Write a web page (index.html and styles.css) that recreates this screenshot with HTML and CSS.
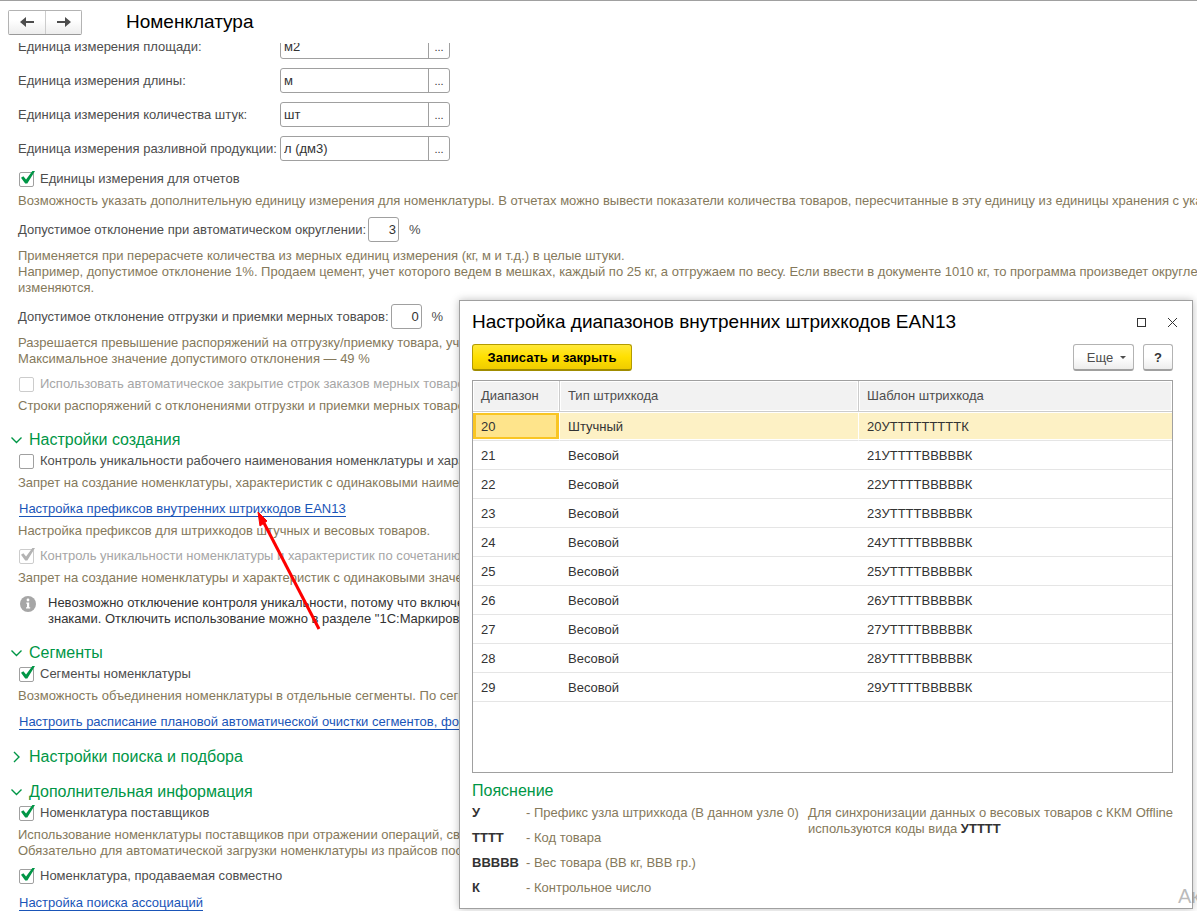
FILE: index.html
```html
<!DOCTYPE html>
<html lang="ru">
<head>
    <meta charset="UTF-8">
    <meta name="viewport" content="width=device-width, initial-scale=1.0">
    <title>Номенклатура</title>
    <link rel="stylesheet" href="styles.css">
</head>
<body>
    <header class="page-header">
        <div class="nav-buttons">
            <button type="button" class="nav-btn" aria-label="Назад">
                <svg width="16" height="12" viewBox="0 0 16 12"><path d="M1 6 L7 1 V5 H15 V7 H7 V11 Z" fill="#4d4d4d"/></svg>
            </button>
            <button type="button" class="nav-btn" aria-label="Вперед">
                <svg width="16" height="12" viewBox="0 0 16 12"><path d="M15 6 L9 1 V5 H1 V7 H9 V11 Z" fill="#4d4d4d"/></svg>
            </button>
        </div>
        <h1 class="page-title">Номенклатура</h1>
    </header>

    <main class="content">
        <form class="settings">
            <div class="field">
                <label class="field-label" for="area">Единица измерения площади:</label>
                <div class="picker"><input type="text" id="area" value="м2"><button type="button">...</button></div>
            </div>
            <div class="field">
                <label class="field-label" for="length">Единица измерения длины:</label>
                <div class="picker"><input type="text" id="length" value="м"><button type="button">...</button></div>
            </div>
            <div class="field">
                <label class="field-label" for="count">Единица измерения количества штук:</label>
                <div class="picker"><input type="text" id="count" value="шт"><button type="button">...</button></div>
            </div>
            <div class="field">
                <label class="field-label" for="liquid">Единица измерения разливной продукции:</label>
                <div class="picker"><input type="text" id="liquid" value="л (дм3)"><button type="button">...</button></div>
            </div>

            <label class="check"><input type="checkbox" checked>Единицы измерения для отчетов</label>
            <p class="hint">Возможность указать дополнительную единицу измерения для номенклатуры. В отчетах можно вывести показатели количества товаров, пересчитанные в эту единицу из единицы хранения с ука</p>

            <div class="field">
                <label for="rounding">Допустимое отклонение при автоматическом округлении:</label>
                <input type="text" class="percent" id="rounding" value="3">
                <span class="unit">%</span>
            </div>
            <p class="hint">Применяется при перерасчете количества из мерных единиц измерения (кг, м и т.д.) в целые штуки.<br>
            Например, допустимое отклонение 1%. Продаем цемент, учет которого ведем в мешках, каждый по 25 кг, а отгружаем по весу. Если ввести в документе 1010 кг, то программа произведет округле<br>
            изменяются.</p>

            <div class="field">
                <label for="shipping">Допустимое отклонение отгрузки и приемки мерных товаров:</label>
                <input type="text" class="percent" id="shipping" value="0">
                <span class="unit">%</span>
            </div>
            <p class="hint">Разрешается превышение распоряжений на отгрузку/приемку товара, уч<br>
            Максимальное значение допустимого отклонения — 49 %</p>
            <label class="check disabled"><input type="checkbox" disabled>Использовать автоматическое закрытие строк заказов мерных товаро</label>
            <p class="hint">Строки распоряжений с отклонениями отгрузки и приемки мерных товаро</p>

            <h2 class="group"><svg class="chevron" width="12" height="12" viewBox="0 0 12 12"><path d="M1 3.5 L6 8.5 L11 3.5"/></svg>Настройки создания</h2>
            <label class="check"><input type="checkbox">Контроль уникальности рабочего наименования номенклатуры и хара</label>
            <p class="hint">Запрет на создание номенклатуры, характеристик с одинаковыми наимен</p>
            <a href="#" class="link">Настройка префиксов внутренних штрихкодов EAN13</a>
            <p class="hint">Настройка префиксов для штрихкодов штучных и весовых товаров.</p>
            <label class="check disabled"><input type="checkbox" checked disabled>Контроль уникальности номенклатуры и характеристик по сочетанию</label>
            <p class="hint">Запрет на создание номенклатуры и характеристик с одинаковыми значе</p>
            <div class="info">
                <svg width="16" height="18" viewBox="0 -1 16 18"><circle cx="8" cy="8" r="8" fill="#a6a6a6"/><circle cx="8" cy="4" r="1.4" fill="#fff"/><path d="M6.3 6.5 H9.2 V11.3 H10.2 V12.6 H6 V11.3 H7 V7.8 H6.3 Z" fill="#fff"/></svg>
                <p>Невозможно отключение контроля уникальности, потому что включе<br>
                знаками. Отключить использование можно в разделе "1С:Маркиров</p>
            </div>

            <h2 class="group"><svg class="chevron" width="12" height="12" viewBox="0 0 12 12"><path d="M1 3.5 L6 8.5 L11 3.5"/></svg>Сегменты</h2>
            <label class="check"><input type="checkbox" checked>Сегменты номенклатуры</label>
            <p class="hint">Возможность объединения номенклатуры в отдельные сегменты. По сегм</p>
            <a href="#" class="link">Настроить расписание плановой автоматической очистки сегментов, фор</a>

            <h2 class="group"><svg class="chevron" width="12" height="12" viewBox="0 0 12 12"><path d="M3.5 1 L8.5 6 L3.5 11"/></svg>Настройки поиска и подбора</h2>

            <h2 class="group"><svg class="chevron" width="12" height="12" viewBox="0 0 12 12"><path d="M1 3.5 L6 8.5 L11 3.5"/></svg>Дополнительная информация</h2>
            <label class="check"><input type="checkbox" checked>Номенклатура поставщиков</label>
            <p class="hint">Использование номенклатуры поставщиков при отражении операций, свя<br>
            Обязательно для автоматической загрузки номенклатуры из прайсов пос</p>
            <label class="check"><input type="checkbox" checked>Номенклатура, продаваемая совместно</label>
            <a href="#" class="link">Настройка поиска ассоциаций</a>
        </form>
    </main>

    <!-- указатель на ссылку настройки -->
    <svg class="pointer" width="64" height="120" viewBox="0 0 64 120">
        <path d="M7 12 L62 118" stroke="#fe0000" stroke-width="3" fill="none"/>
        <path d="M1 1 L10 10 L3 15 Z" fill="#fe0000" stroke="#fe0000"/>
    </svg>

    <section class="dialog" role="dialog" aria-labelledby="dialogTitle">
        <div class="dialog-header">
            <h2 class="dialog-title" id="dialogTitle">Настройка диапазонов внутренних штрихкодов EAN13</h2>
            <button type="button" class="window-btn" aria-label="Развернуть">
                <svg width="11" height="11" viewBox="0 0 11 11"><rect x="1.5" y="1.5" width="8" height="8"/></svg>
            </button>
            <button type="button" class="window-btn" aria-label="Закрыть">
                <svg width="11" height="11" viewBox="0 0 11 11"><path d="M1 1 L10 10 M10 1 L1 10"/></svg>
            </button>
        </div>

        <div class="toolbar">
            <button type="button" class="btn btn-primary">Записать и закрыть</button>
            <button type="button" class="btn btn-more">Еще <span class="caret"></span></button>
            <button type="button" class="btn btn-help">?</button>
        </div>

        <div class="table-box">
            <table class="ranges">
                <thead>
                    <tr><th class="col-range">Диапазон</th><th class="col-type">Тип штрихкода</th><th>Шаблон штрихкода</th></tr>
                </thead>
                <tbody>
                    <tr class="selected"><td>20</td><td>Штучный</td><td>20УТТТТТТТТТК</td></tr>
                    <tr><td>21</td><td>Весовой</td><td>21УТТТТВВВВВК</td></tr>
                    <tr><td>22</td><td>Весовой</td><td>22УТТТТВВВВВК</td></tr>
                    <tr><td>23</td><td>Весовой</td><td>23УТТТТВВВВВК</td></tr>
                    <tr><td>24</td><td>Весовой</td><td>24УТТТТВВВВВК</td></tr>
                    <tr><td>25</td><td>Весовой</td><td>25УТТТТВВВВВК</td></tr>
                    <tr><td>26</td><td>Весовой</td><td>26УТТТТВВВВВК</td></tr>
                    <tr><td>27</td><td>Весовой</td><td>27УТТТТВВВВВК</td></tr>
                    <tr><td>28</td><td>Весовой</td><td>28УТТТТВВВВВК</td></tr>
                    <tr><td>29</td><td>Весовой</td><td>29УТТТТВВВВВК</td></tr>
                </tbody>
            </table>
        </div>

        <h3 class="legend-title">Пояснение</h3>
        <div class="legend">
            <dl class="legend-list">
                <dt>У</dt><dd>- Префикс узла штрихкода (В данном узле 0)</dd>
                <dt>ТТТТ</dt><dd>- Код товара</dd>
                <dt>ВВВВВ</dt><dd>- Вес товара (ВВ кг, ВВВ гр.)</dd>
                <dt>К</dt><dd>- Контрольное число</dd>
            </dl>
            <p class="legend-note">Для синхронизации данных о весовых товаров с ККМ Offline<br>используются коды вида <b>УТТТТ</b></p>
        </div>
    </section>

    <div class="watermark">Ак</div>
</body>
</html>
```
FILE: styles.css
```css
* {
    box-sizing: border-box;
}
body {
    position: relative;
    display: flex;
    flex-direction: column;
    height: 100vh;
    margin: 0;
    overflow: hidden;
    border-top: 1px solid #a0a0a0;
    background-color: white;
    color: #4d4d4d;
    font-family: Arial, "Liberation Sans", sans-serif;
    font-size: 13px;
    line-height: 16px;
}
h1, h2, h3, p, dl, dd {
    margin: 0;
    font-weight: normal;
}
input, button {
    font-family: inherit;
    font-size: 13px;
    color: #333333;
}

/* шапка */
.page-header {
    display: flex;
    align-items: center;
    flex-shrink: 0;
    gap: 44px;
    height: 42px;
    padding-left: 8px;
}
.nav-buttons {
    display: flex;
    border: 1px solid #b3b3b3;
    border-bottom-color: #999999;
    border-radius: 2px;
}
.nav-btn {
    display: flex;
    align-items: center;
    justify-content: center;
    width: 36px;
    height: 23px;
    padding: 0;
    border: none;
    background: linear-gradient(#ffffff 40%, #ededed);
}
.nav-btn + .nav-btn {
    border-left: 1px solid #cccccc;
}
.page-title {
    font-size: 19px;
    line-height: 24px;
    color: black;
}

/* настройки */
.content {
    flex: 1;
    min-height: 0;
    overflow: hidden;
    padding-left: 18px;
}
.settings {
    display: flex;
    flex-direction: column;
    align-items: flex-start;
    margin-top: -18px;
    white-space: nowrap;
}
.field {
    display: flex;
    align-items: center;
    margin-top: 9px;
}
.hint + .field {
    margin-top: 8px;
}
.field-label {
    width: 262px;
}
.picker {
    display: flex;
    width: 170px;
    height: 25px;
    border: 1px solid #a0a0a0;
    border-radius: 3px;
}
.picker input {
    flex: 1;
    min-width: 0;
    padding: 0 3px;
    border: none;
    background: none;
}
.picker button {
    width: 21px;
    padding: 0;
    border: none;
    border-left: 1px solid #a0a0a0;
    background: none;
    font-size: 11px;
}
.percent {
    width: 31px;
    height: 25px;
    margin: 0 10px 0 2px;
    padding: 0 2px;
    border: 1px solid #a0a0a0;
    border-radius: 3px;
    text-align: right;
}
.check {
    display: flex;
    align-items: center;
    gap: 6px;
    margin-top: 9px;
}
.field + .check {
    margin-top: 10px;
}
.check input {
    position: relative;
    appearance: none;
    width: 15px;
    height: 15px;
    margin: 0 0 0 1px;
    border: 1px solid #a0a0a0;
    border-radius: 2px;
    background-color: white;
}
.check input:checked::before {
    content: "";
    position: absolute;
    top: -2px;
    left: 1px;
    width: 14px;
    height: 13px;
    background-color: #009646;
    clip-path: polygon(0 55%, 17% 45%, 36% 70%, 84% 0, 100% 4%, 45% 100%, 30% 100%);
}
.check.disabled {
    color: #a6a6a6;
}
.check.disabled input {
    border-color: #cccccc;
}
.check.disabled input:checked::before {
    background-color: #b3b3b3;
}
.hint {
    margin-top: 6px;
    color: #85795b;
}
.link {
    margin: 10px 0 0 1px;
    border-bottom: 1px solid #1a55b8;
    line-height: 15px;
    color: #1a55b8;
    text-decoration: none;
}
.check + .link {
    margin-top: 11px;
}
.group {
    display: flex;
    align-items: center;
    gap: 6px;
    margin: 16px 0 0 -8px;
    font-size: 16px;
    line-height: 20px;
    color: #009646;
}
.link + .group {
    margin-top: 17px;
}
.group + .group {
    margin-top: 15px;
}
.group + .check {
    margin-top: 3px;
}
.chevron {
    width: 13px;
}
.chevron path {
    fill: none;
    stroke: #009646;
    stroke-width: 1.4;
}
.info {
    display: flex;
    align-items: flex-start;
    gap: 12px;
    margin: 9px 0 0 2px;
    color: #333333;
}

/* стрелка */
.pointer {
    position: absolute;
    top: 510px;
    left: 257px;
}

/* окно диапазонов */
.dialog {
    position: absolute;
    top: 299px;
    right: 4px;
    width: 734px;
    padding: 8px 19px 12px 12px;
    border: 1px solid #a0a0a0;
    background-color: white;
    box-shadow: 0 0 8px rgba(0,0,0,0.25);
}
.dialog-header {
    display: flex;
    align-items: center;
    gap: 10px;
    margin-right: -10px;
}
.dialog-title {
    flex: 1;
    font-size: 19px;
    line-height: 26px;
    color: black;
}
.window-btn {
    display: flex;
    align-items: center;
    justify-content: center;
    width: 21px;
    height: 21px;
    padding: 0;
    border: none;
    background: none;
}
.window-btn svg {
    fill: none;
    stroke: #333333;
}
.toolbar {
    display: flex;
    gap: 9px;
    margin-top: 9px;
}
.btn {
    height: 27px;
    padding: 0;
    border: 1px solid #b3b3b3;
    border-bottom: 2px solid #a0a0a0;
    border-radius: 3px;
    background: linear-gradient(#ffffff 50%, #ededed);
}
.btn-primary {
    width: 160px;
    margin-right: auto;
    border: 1px solid #b39b00;
    border-bottom: 2px solid #a08c00;
    background: linear-gradient(#ffe838, #ffe000 50%, #efcc00);
    font-weight: bold;
    color: black;
}
.btn-more {
    display: flex;
    align-items: center;
    justify-content: center;
    gap: 7px;
    width: 61px;
    padding-left: 6px;
    color: #4d4d4d;
}
.caret {
    border: 3px solid transparent;
    border-top-color: #4d4d4d;
    border-bottom: none;
}
.btn-help {
    width: 30px;
    font-weight: bold;
}
.table-box {
    height: 393px;
    margin-top: 9px;
    border: 1px solid #a0a0a0;
}
.ranges {
    width: 100%;
    border-collapse: separate;
    border-spacing: 0;
    table-layout: fixed;
    color: #333333;
}
.ranges th {
    height: 31px;
    padding: 0 8px;
    border-right: 1px solid #cccccc;
    border-bottom: 1px solid #cccccc;
    background-color: #f2f2f2;
    box-shadow: inset 0 0 0 1px white;
    font-weight: normal;
    text-align: left;
    color: #4d4d4d;
}
.ranges th:last-child {
    border-right: none;
}
.ranges .col-range {
    width: 87px;
}
.ranges .col-type {
    width: 299px;
}
.ranges td {
    height: 29px;
    padding: 1px 8px 0;
    border-bottom: 1px solid #e5e5e5;
}
.ranges .selected td {
    border-right: 1px solid white;
    background-color: #fdf1c5;
    box-shadow: inset 0 1px white, inset 0 -1px white;
}
.ranges .selected td:first-child {
    background-color: #fee48b;
    box-shadow: inset 0 1px white, inset 0 -1px white, inset 0 0 0 3px #f9c523;
}
.ranges .selected td:last-child {
    border-right: none;
}
.legend-title {
    margin-top: 8px;
    font-size: 16px;
    line-height: 20px;
    color: #009646;
}
.legend {
    display: flex;
    justify-content: space-between;
    margin-top: 4px;
    color: #85795b;
    white-space: nowrap;
}
.legend-list {
    display: grid;
    grid-template-columns: 54px auto;
    row-gap: 9px;
}
.legend dt, .legend b {
    font-weight: bold;
    color: #333333;
}

/* надпись активации системы поверх окна */
.watermark {
    position: absolute;
    top: 883px;
    left: calc(100% - 19px);
    font-size: 20px;
    line-height: 24px;
    color: rgba(120,120,120,0.5);
}
```
